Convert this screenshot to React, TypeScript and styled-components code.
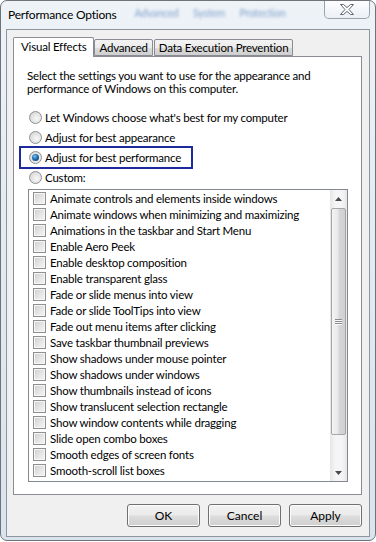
import styled, { createGlobalStyle } from "styled-components"

const GlobalStyle = createGlobalStyle`
  html, body {
    margin: 0;
    padding: 0;
    background: #ffffff;
  }
  body {
    font-family: Lato, "Liberation Sans", sans-serif;
    font-size: 11.5px;
    letter-spacing: -0.2px;
    color: #000;
  }
`

const Window = styled.div`
  width: 376px;
  height: 541px;
  box-sizing: border-box;
  border: 1px solid #6f7378;
  border-radius: 7px;
  background: linear-gradient(180deg, #eef3f8 0%, #e3ebf3 40%, #d9e4ee 100%);
  display: flex;
  flex-direction: column;
  overflow: hidden;
`

const TitleBar = styled.div`
  height: 28px;
  display: flex;
  align-items: flex-start;
  padding-left: 7px;
`

const Title = styled.span`
  line-height: 28px;
  font-size: 12px;
  color: #000;
  white-space: nowrap;
  flex-shrink: 0;
`

const GhostText = styled.span`
  margin-left: 18px;
  line-height: 24px;
  font-size: 10.5px;
  color: #6f93c4;
  filter: blur(1.4px);
  white-space: nowrap;
  word-spacing: 12px;
  opacity: 0.85;
`

const CloseButton = styled.div`
  flex-shrink: 0;
  margin-left: auto;
  margin-right: 5px;
  margin-top: -1px;
  width: 46px;
  height: 19px;
  box-sizing: border-box;
  border: 1px solid #9aa3ad;
  border-top: none;
  border-radius: 0 0 5px 5px;
  background: linear-gradient(180deg, rgba(255,255,255,0.9), rgba(235,240,246,0.9));
  display: flex;
  align-items: center;
  justify-content: center;
`

const Client = styled.div`
  margin: 0 5px 0 5px;
  height: 508px;
  box-sizing: border-box;
  border: 1px solid #8f959c;
  background: #f0f0f0;
  padding: 7px 7px 9px 6px;
  display: flex;
  flex-direction: column;
`

const TabStrip = styled.div`
  display: flex;
  align-items: flex-end;
  height: 19px;
  position: relative;
  z-index: 1;
`

const Tab = styled.div<{ $active?: boolean }>`
  box-sizing: border-box;
  height: ${({ $active }) => ($active ? "20px" : "17px")};
  margin-bottom: ${({ $active }) => ($active ? "-1px" : "0")};
  padding: 0 ${({ $active }) => ($active ? "7px" : "4px")};
  border: 1px solid #898c95;
  border-bottom: ${({ $active }) => ($active ? "none" : "1px solid #898c95")};
  border-radius: 2px 2px 0 0;
  background: ${({ $active }) =>
    $active ? "#ffffff" : "linear-gradient(180deg, #f3f3f3 0%, #ebebeb 50%, #dddddd 51%, #cfcfcf 100%)"};
  line-height: ${({ $active }) => ($active ? "18px" : "15px")};
  white-space: nowrap;
  margin-right: ${({ $active }) => ($active ? "0" : "1px")};
`

const Panel = styled.div`
  height: 440px;
  box-sizing: border-box;
  border: 1px solid #898c95;
  background: #ffffff;
  padding: 12px 12px 0 13px;
  display: flex;
  flex-direction: column;
`

const Description = styled.p`
  margin: 0;
  line-height: 13px;
  white-space: nowrap;
`

const RadioGroup = styled.div`
  margin-top: 12px;
  display: flex;
  flex-direction: column;
`

const RadioRow = styled.label`
  position: relative;
  height: 20px;
  display: flex;
  align-items: center;
  gap: 3px;
  padding-left: 2px;
  white-space: nowrap;
`

const RadioDot = styled.span<{ $checked?: boolean }>`
  width: 13px;
  height: 13px;
  box-sizing: border-box;
  border-radius: 50%;
  border: 1px solid #8e8f8f;
  background: radial-gradient(circle at 60% 60%, #f8f8f8 0%, #e2e2e2 55%, #c9c9c9 100%);
  display: flex;
  align-items: center;
  justify-content: center;
  &::after {
    content: "";
    display: ${({ $checked }) => ($checked ? "block" : "none")};
    width: 7px;
    height: 7px;
    border-radius: 50%;
    background: radial-gradient(circle at 40% 35%, #7ec3ef 0%, #1d6fb0 45%, #0b2f5a 100%);
  }
`

const Highlight = styled.span`
  position: absolute;
  left: -8px;
  top: -1px;
  width: 174px;
  height: 23px;
  box-sizing: border-box;
  border: 2px solid #1c2a9c;
  pointer-events: none;
`

const ListBox = styled.div`
  margin: 2px 0 0 1px;
  width: 320px;
  height: 293px;
  box-sizing: border-box;
  border: 1px solid #828790;
  background: #fff;
  display: flex;
`

const Items = styled.div`
  flex: 1;
  display: flex;
  flex-direction: column;
  padding-left: 4px;
`

const Item = styled.div`
  height: 16px;
  display: flex;
  align-items: center;
  gap: 4px;
  white-space: nowrap;
`

const CheckBox = styled.span`
  width: 13px;
  height: 13px;
  box-sizing: border-box;
  border: 1px solid #8e8f8f;
  box-shadow: inset 0 0 0 1px #f6f6f6;
  background: linear-gradient(135deg, #cdcdcd 0%, #e6e6e6 55%, #f7f7f7 100%);
  flex-shrink: 0;
`

const ScrollBar = styled.div`
  width: 17px;
  display: flex;
  flex-direction: column;
  background: linear-gradient(90deg, #e6e6e6, #f5f5f5 30%, #f5f5f5 70%, #e6e6e6);
`

const ArrowButton = styled.div<{ $bottom?: boolean }>`
  height: 17px;
  margin-top: ${({ $bottom }) => ($bottom ? "auto" : "0")};
  display: flex;
  align-items: center;
  justify-content: center;
`

const Thumb = styled.div`
  margin: 1px 1px 0 1px;
  height: 227px;
  box-sizing: border-box;
  border: 1px solid #a6a6a6;
  border-radius: 2px;
  background: linear-gradient(90deg, #f4f4f4 0%, #e8e8e8 45%, #d6d6d6 55%, #cfcfcf 100%);
  display: flex;
  align-items: center;
  justify-content: center;
`

const Gripper = styled.div`
  width: 7px;
  display: flex;
  flex-direction: column;
  gap: 1px;
  & > span {
    height: 1px;
    background: #8a8a8a;
    box-shadow: 0 1px 0 #fafafa;
  }
`

const ButtonRow = styled.div`
  margin-top: 9px;
  display: flex;
  justify-content: flex-end;
  gap: 8px;
`

const Button = styled.button`
  width: 73px;
  height: 23px;
  box-sizing: border-box;
  border: 1px solid #707070;
  border-radius: 3px;
  background: linear-gradient(180deg, #f2f2f2 0%, #ebebeb 48%, #dddddd 52%, #cfcfcf 100%);
  box-shadow: inset 0 0 0 1px #fcfcfc;
  font-family: Lato, "Liberation Sans", sans-serif;
  font-size: 12px;
  color: #000;
  padding: 0;
`

const options = [
  "Animate controls and elements inside windows",
  "Animate windows when minimizing and maximizing",
  "Animations in the taskbar and Start Menu",
  "Enable Aero Peek",
  "Enable desktop composition",
  "Enable transparent glass",
  "Fade or slide menus into view",
  "Fade or slide ToolTips into view",
  "Fade out menu items after clicking",
  "Save taskbar thumbnail previews",
  "Show shadows under mouse pointer",
  "Show shadows under windows",
  "Show thumbnails instead of icons",
  "Show translucent selection rectangle",
  "Show window contents while dragging",
  "Slide open combo boxes",
  "Smooth edges of screen fonts",
  "Smooth-scroll list boxes",
]

const radios = [
  "Let Windows choose what's best for my computer",
  "Adjust for best appearance",
  "Adjust for best performance",
  "Custom:",
]

export default function App() {
  return (
    <>
      <GlobalStyle />
      <Window>
        <TitleBar>
          <Title>Performance Options</Title>
          <GhostText>Advanced System Protection</GhostText>
          <CloseButton>
            <svg width="14" height="11" viewBox="0 0 14 11">
              <polygon
                points="0.5,0.5 3.5,0.5 7,3.6 10.5,0.5 13.5,0.5 9,5.5 13.5,10.5 10.5,10.5 7,7.4 3.5,10.5 0.5,10.5 5,5.5"
                fill="#fdfdfd"
                stroke="#5e6670"
                strokeWidth="1"
              />
            </svg>
          </CloseButton>
        </TitleBar>
        <Client>
          <TabStrip>
            <Tab $active>Visual Effects</Tab>
            <Tab>Advanced</Tab>
            <Tab>Data Execution Prevention</Tab>
          </TabStrip>
          <Panel>
            <Description>
              Select the settings you want to use for the appearance and
              <br />
              performance of Windows on this computer.
            </Description>
            <RadioGroup>
              {radios.map((r, i) => (
                <RadioRow key={r}>
                  <RadioDot $checked={i === 2} />
                  {r}
                  {i === 2 && <Highlight />}
                </RadioRow>
              ))}
            </RadioGroup>
            <ListBox>
              <Items>
                {options.map((o) => (
                  <Item key={o}>
                    <CheckBox />
                    {o}
                  </Item>
                ))}
              </Items>
              <ScrollBar>
                <ArrowButton>
                  <svg width="7" height="4" viewBox="0 0 7 4">
                    <polygon points="3.5,0 7,4 0,4" fill="#4a4a4a" />
                  </svg>
                </ArrowButton>
                <Thumb>
                  <Gripper>
                    <span />
                    <span />
                    <span />
                  </Gripper>
                </Thumb>
                <ArrowButton $bottom>
                  <svg width="7" height="4" viewBox="0 0 7 4">
                    <polygon points="0,0 7,0 3.5,4" fill="#4a4a4a" />
                  </svg>
                </ArrowButton>
              </ScrollBar>
            </ListBox>
          </Panel>
          <ButtonRow>
            <Button>OK</Button>
            <Button>Cancel</Button>
            <Button>Apply</Button>
          </ButtonRow>
        </Client>
      </Window>
    </>
  )
}
